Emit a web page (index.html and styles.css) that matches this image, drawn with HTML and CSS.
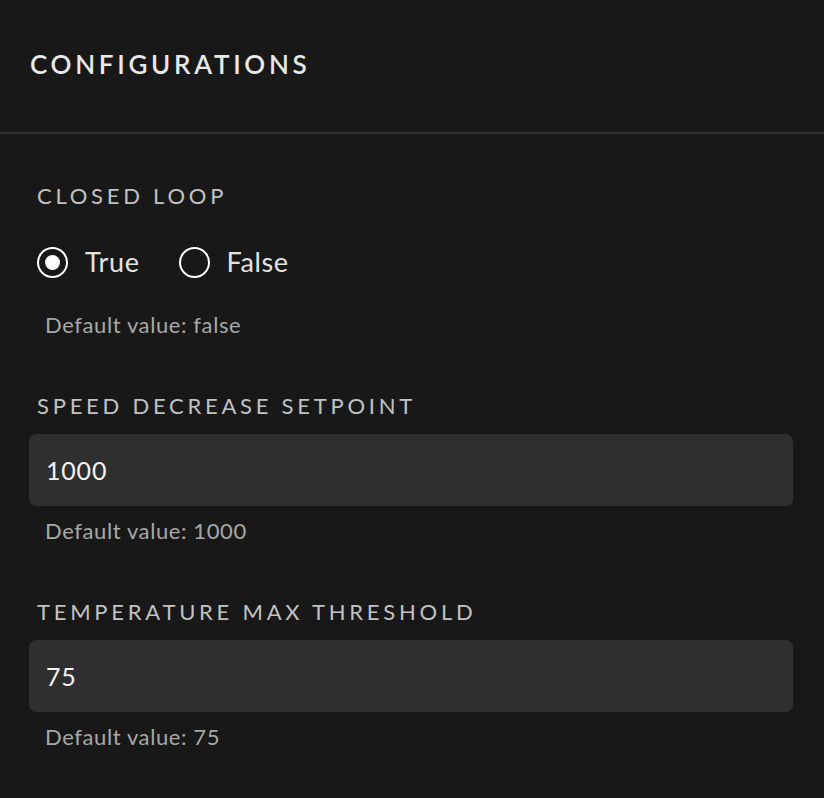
FILE: index.html
```html
<!DOCTYPE html>
<html>
<head>
<meta charset="utf-8">
<link rel="stylesheet" href="styles.css">
</head>
<body>
<div class="panel">
  <header class="panel-header">
    <h1 class="title">CONFIGURATIONS</h1>
  </header>
  <div class="content">
    <div class="field field-first">
      <div class="label">CLOSED LOOP</div>
      <div class="radios">
        <label class="radio"><span class="dot checked"></span><span class="radio-text">True</span></label>
        <label class="radio"><span class="dot"></span><span class="radio-text">False</span></label>
      </div>
      <div class="hint hint-radio">Default value: false</div>
    </div>
    <div class="field">
      <div class="label">SPEED DECREASE SETPOINT</div>
      <div class="input">1000</div>
      <div class="hint">Default value: 1000</div>
    </div>
    <div class="field">
      <div class="label">TEMPERATURE MAX THRESHOLD</div>
      <div class="input">75</div>
      <div class="hint">Default value: 75</div>
    </div>
  </div>
</div>
</body>
</html>
```
FILE: styles.css
```css
html, body {
  margin: 0;
  padding: 0;
  background: #181818;
}
body {
  font-family: Lato, "Noto Sans", sans-serif;
  width: 824px;
  height: 798px;
  overflow: hidden;
}
.panel-header {
  padding: 48px 30px 52px;
  border-bottom: 2px solid #303030;
}
.title {
  margin: 0;
  font-size: 26px;
  line-height: 32px;
  font-weight: 600;
  letter-spacing: 3.7px;
  color: #e8e8e8;
}
.content {
  padding: 50px 31px 0 29px;
  display: flex;
  flex-direction: column;
  gap: 57px;
}
.field {
  display: flex;
  flex-direction: column;
}
.label {
  padding-left: 8px;
  font-size: 22px;
  line-height: 24px;
  letter-spacing: 3.75px;
  color: #c2c2c2;
}
.radios {
  margin-top: 34px;
  height: 40px;
  padding-left: 8px;
  display: flex;
  align-items: center;
  gap: 39px;
}
.radio {
  display: flex;
  align-items: center;
  gap: 17px;
}
.dot {
  width: 27px;
  height: 27px;
  border: 2.5px solid #ffffff;
  border-radius: 50%;
  display: flex;
  align-items: center;
  justify-content: center;
}
.dot.checked::after {
  content: "";
  width: 15px;
  height: 15px;
  border-radius: 50%;
  background: #ffffff;
}
.radio-text {
  font-size: 27px;
  line-height: 32px;
  letter-spacing: 0.6px;
  color: #e2e2e2;
}
.hint {
  margin-top: 13px;
  padding-left: 16px;
  font-size: 22px;
  line-height: 24px;
  letter-spacing: 0.6px;
  color: #a8a8a8;
}
.hint-radio {
  margin-top: 31px;
}
.input {
  margin-top: 16px;
  height: 72px;
  box-sizing: border-box;
  padding-left: 17px;
  display: flex;
  align-items: center;
  background: #2f2f2f;
  border-radius: 7px;
  font-size: 25px;
  letter-spacing: 0.8px;
  color: #f2f2f2;
}
```
